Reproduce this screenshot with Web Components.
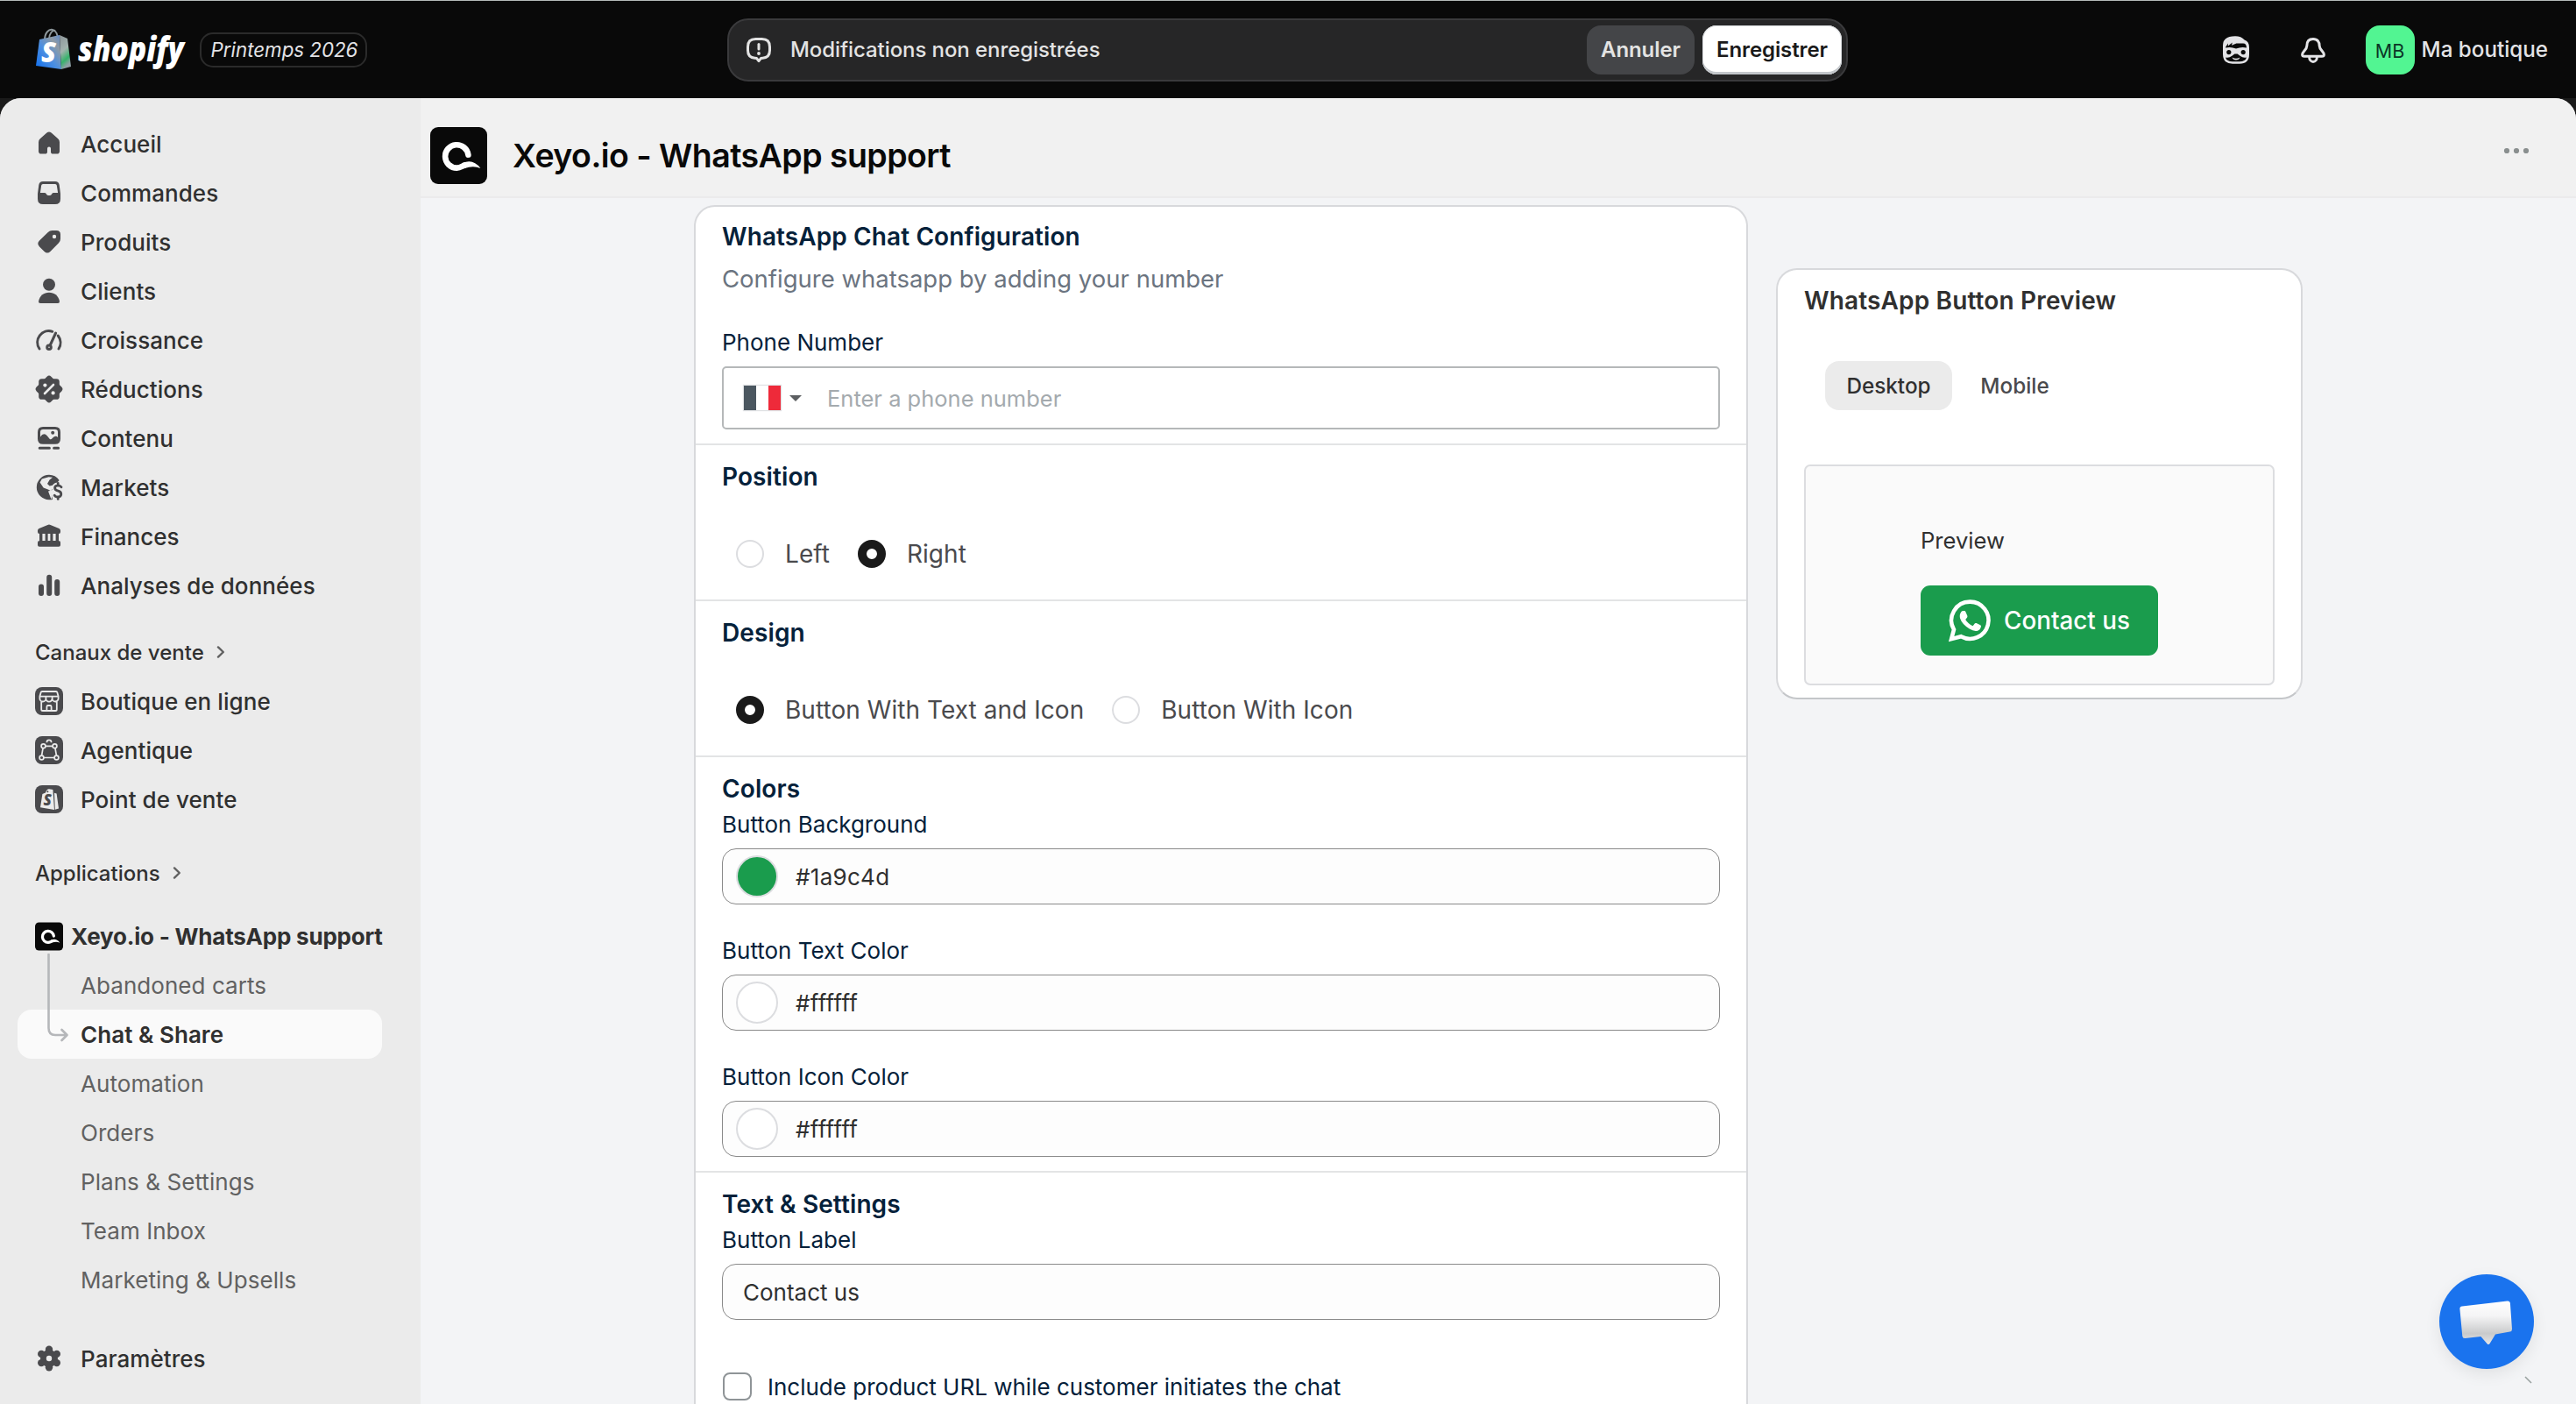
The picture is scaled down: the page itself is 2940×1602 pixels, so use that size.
<!DOCTYPE html>
<html lang="fr">
<head>
<meta charset="utf-8">
<title>Xeyo.io - WhatsApp support</title>
<style>
  html, body {
    margin: 0;
    height: 100%;
    overflow: hidden;
    background: #090909;
    font-family: Inter, "Liberation Sans", sans-serif;
    font-size: 26px;
  }
</style>
</head>
<body>
<admin-app></admin-app>
<script>
// Icons, drawn on a 40x40 grid
const icons = {
  home: '<path fill="currentColor" d="M17.4 7.6 9.8 14.2Q8 15.8 8 18.2V28.5Q8 31.6 11 31.6H15.4Q18 31.6 18 29V25.6A2 2 0 0 1 22 25.6V29Q22 31.6 24.6 31.6H29Q32 31.6 32 28.5V18.2Q32 15.8 30.2 14.2L22.6 7.6Q20 5.6 17.4 7.6Z"/>',
  orders: '<path fill="currentColor" fill-rule="evenodd" d="M13 7H27Q31 7 31.7 11L33 21V27Q33 33 27 33H13Q7 33 7 27V21L8.3 11Q9 7 13 7ZM13 10Q11.4 10 11.2 11.6L9.9 20H14.8Q16.2 20 16.8 21.3 17.5 23 19 23H21Q22.5 23 23.2 21.3 23.8 20 25.2 20H30.1L28.8 11.6Q28.6 10 27 10Z"/>',
  products: '<path fill="currentColor" fill-rule="evenodd" d="M23.5 7H28.5Q33 7 33 11.5V16.5Q33 19.2 31 21.2L21.4 31Q18 34.2 14.6 31L9 25.4Q5.6 22 9 18.6L18.8 9Q20.8 7 23.5 7ZM26 11.8A2.2 2.2 0 1 0 26 16.2A2.2 2.2 0 1 0 26 11.8Z"/>',
  customers: '<circle fill="currentColor" cx="20" cy="12.8" r="7"/><path fill="currentColor" d="M8 31.8C9.4 25.4 14 21.8 20 21.8S30.6 25.4 32 31.8Q32.2 34 30 34H10Q7.8 34 8 31.8Z"/>',
  growth: '<g fill="none" stroke="currentColor" stroke-width="3" stroke-linecap="round"><path d="M9 30A13 13 0 0 1 23.8 10.3M30.2 15A13 13 0 0 1 31 30"/><path d="M27.6 12 21.4 25.5"/><circle cx="20" cy="28.2" r="2.3"/></g>',
  discount: '<g fill="currentColor"><rect x="8.2" y="8.2" width="23.6" height="23.6" rx="3.4"/><rect x="8.2" y="8.2" width="23.6" height="23.6" rx="3.4" transform="rotate(45 20 20)"/></g><path stroke="#ebebeb" stroke-width="2.6" stroke-linecap="round" d="M15 25 25 15"/><circle fill="#ebebeb" cx="15.4" cy="15.6" r="2.1"/><circle fill="#ebebeb" cx="24.6" cy="24.4" r="2.1"/>',
  content: '<path fill="currentColor" fill-rule="evenodd" d="M13 7H27Q33 7 33 13V20.8Q33 26.8 27 26.8H13Q7 26.8 7 20.8V13Q7 7 13 7ZM13 10Q10 10 10 13V18.4Q14 12.6 18 17.6L20.6 20.8Q22 22.2 24 19.8 27.4 16.2 30 19V13Q30 10 27 10Z"/><circle fill="currentColor" cx="24.2" cy="13.8" r="2"/><path stroke="currentColor" stroke-width="3" stroke-linecap="round" d="M9.2 31.2H20.4M25.6 31.2H30.6"/>',
  markets: '<path fill="currentColor" fill-rule="evenodd" d="M20 5.8A14.2 14.2 0 0 1 31.6 12L27 17.6 22 24.6 24 29V34Q22 34.4 20 34.2A14.2 14.2 0 0 1 20 5.8ZM11.8 10.4 9.6 14.6 13.6 20.4 19.4 22.8 22.4 24.4 25.4 20.6 25 17.4 20.6 18.6 18 16 20.6 11.4 24 8.8 19.6 8.2Z"/><path fill="#ebebeb" d="M19 24.5 25 23 23 34 21.6 31.4Z"/><g fill="none" stroke="#ebebeb" stroke-width="6"><path d="M34 19.6Q32.6 17.6 30 17.6 26.6 17.8 26.6 20.8 26.6 23.4 30.4 24.2 33.8 25 33.8 28 33.6 31 30.2 31.2 27 31.2 26 29"/></g><path fill="none" stroke="currentColor" stroke-width="2.8" stroke-linecap="round" d="M34 19.8Q32.6 17.8 30 17.8 26.6 18 26.6 20.8 26.6 23.4 30.4 24.2 33.8 25 33.8 28 33.6 31 30.2 31.2 27.2 31.2 26.2 29.2M30.2 15.4V18M30.2 31V33.4"/>',
  finance: '<path fill="currentColor" d="M7 15V13.4Q7 11.6 8.6 11L18.4 6.9Q20 6.2 21.6 6.9L31.4 11Q33 11.6 33 13.4V15Q33 17 31 17H9Q7 17 7 15ZM7 27Q7 25 9 25H31Q33 25 33 27V30Q33 31.8 31 31.8H9Q7 31.8 7 30ZM9 16h3.4v10H9zM15.6 16h3v10h-3zM21.4 16h3v10h-3zM27.6 16H31v10h-3.4z"/>',
  analytics: '<g fill="currentColor"><rect x="8" y="18.6" width="6" height="13.4" rx="3"/><rect x="17.2" y="7.8" width="6" height="24.2" rx="3"/><rect x="26.2" y="13" width="6" height="19" rx="3"/></g>',
  store: '<rect x="4" y="4" width="32" height="32" rx="8" fill="currentColor"/><g fill="none" stroke="#ebebeb" stroke-width="1.8" stroke-linejoin="round"><path d="M12 9H28Q29 9 29.3 10L30.6 14.6H9.4L10.7 10Q11 9 12 9ZM9.4 14.6V17A3.5 3.5 0 0 0 16.4 17A3.6 3.6 0 0 0 23.6 17A3.5 3.5 0 0 0 30.6 17V14.6M16.4 14.6V17M23.6 14.6V17M11.2 20V29.4Q11.2 31 12.8 31H27.2Q28.8 31 28.8 29.4V20M17.4 31V26.4Q17.4 25 18.8 25H21.2Q22.6 25 22.6 26.4V31"/></g>',
  agent: '<rect x="4" y="4" width="32" height="32" rx="8" fill="currentColor"/><g fill="none" stroke="#ebebeb" stroke-width="1.7"><path d="M16 15.3H24M13 17.8 11.6 26M27 17.8 28.4 26M14 28.5H26M17.4 11.2V11A2.6 2.6 0 0 1 22.6 11V11.2"/><circle cx="13.5" cy="15.3" r="2.4"/><circle cx="26.5" cy="15.3" r="2.4"/><circle cx="11.5" cy="28.5" r="2.4"/><circle cx="28.5" cy="28.5" r="2.4"/></g>',
  pos: '<rect x="4" y="4" width="32" height="32" rx="8" fill="currentColor"/><path fill="#ebebeb" d="M12.4 14 16 12.6Q17 8.4 20 8.2L24.4 9 26 32 10 29.2ZM26 12.8 28.6 13.4 31 30.6 26.8 31.8Z"/><text x="13.4" y="27" font-family="Open Sans" font-weight="800" font-style="italic" font-size="17" fill="#4a4a4d">S</text><circle cx="18.4" cy="11.2" r="1" fill="#4a4a4d"/>',
  gear: '<g fill="currentColor"><circle cx="20" cy="20" r="10"/><circle cx="20" cy="9.8" r="4.2"/><circle cx="20" cy="30.2" r="4.2"/><circle cx="11.2" cy="14.9" r="4.2"/><circle cx="28.8" cy="14.9" r="4.2"/><circle cx="11.2" cy="25.1" r="4.2"/><circle cx="28.8" cy="25.1" r="4.2"/></g><circle cx="20" cy="20" r="3.2" fill="#ebebeb"/>',
  chevron: '<path fill="none" stroke="currentColor" stroke-width="2.4" stroke-linecap="round" stroke-linejoin="round" d="M17 14.4 22.8 20 17 25.6"/>',
  alert: '<path fill="none" stroke="currentColor" stroke-width="3" stroke-linejoin="round" d="M16.4 7.5H23.6Q32.5 7.5 32.5 16.4V20.4Q32.5 28.4 24.6 29.2L22.4 29.6 20 32.6 17.6 29.6 15.4 29.2Q7.5 28.4 7.5 20.4V16.4Q7.5 7.5 16.4 7.5Z"/><path stroke="currentColor" stroke-width="3" stroke-linecap="round" d="M20 13.4V19"/><circle cx="20" cy="24" r="1.9" fill="currentColor"/>',
  sidekick: '<path fill="currentColor" d="M19 4.3Q26 4.3 29.6 8.6 35 10.6 35 17V25Q35 35.7 24 35.7H16Q5 35.7 5 25V15Q5 4.3 19 4.3Z"/><path fill="#090909" d="M8.2 16.6 11 12.6 10.8 15.4 15.8 11.6 15 14.8 20.4 12.4H28Q32 12.4 32 17.6 26 16.2 20 18.6 14 16.2 8.2 17.6ZM8 28.4Q11.6 29.6 15.4 26.8L18.4 24.6H21.6L24.6 26.8Q28.4 29.6 32 28.4 30.6 33.2 24 33.2H16Q9.4 33.2 8 28.4Z"/><circle cx="11.8" cy="22.6" r="2.6" fill="#090909"/><circle cx="28.2" cy="22.6" r="2.6" fill="#090909"/><path fill="currentColor" d="M15.6 28.4Q20 31 24.4 28.4 23.6 31.4 20 31.4T15.6 28.4Z"/>',
  bell: '<path fill="none" stroke="currentColor" stroke-width="3" stroke-linejoin="round" d="M20 7.5C15 7.5 12.8 10.8 12.8 15.4 12.8 19.6 7.6 22 7.6 25.2 7.6 26.6 8.6 27.2 10 27.2H30C31.4 27.2 32.4 26.6 32.4 25.2 32.4 22 27.2 19.6 27.2 15.4 27.2 10.8 25 7.5 20 7.5ZM15.6 28A4.4 5.4 0 0 0 24.4 28"/>',
  dots: '<g fill="currentColor"><circle cx="9" cy="20" r="3.1"/><circle cx="20" cy="20" r="3.1"/><circle cx="31" cy="20" r="3.1"/></g>',
  whatsapp: '<path fill="none" stroke="currentColor" stroke-width="3.8" stroke-linejoin="miter" d="M20.4 2.2A17.6 17.6 0 1 1 11.8 35.2L2.6 37.6 5 28.6A17.6 17.6 0 0 1 20.4 2.2Z"/><path fill="currentColor" d="M13.6 10.8H15Q15.8 10.8 16.2 11.8L17.8 15.6Q18 16.4 17.6 17L16 19.2Q18.6 23.4 23 25.2L25 22.8Q25.6 22.2 26.4 22.6L30.2 24.4Q31 24.8 30.8 25.8 30.4 28.6 28 29.6 24.6 31 19.8 28 12.6 23.6 10.8 17.8 10 14 12.2 11.4 12.8 10.8 13.6 10.8Z"/>',
};

class UiIcon extends HTMLElement {
  connectedCallback() {
    this.attachShadow({ mode: 'open' }).innerHTML = `
<style>
  :host { display: block; flex: none; width: 40px; height: 40px; }
  svg { display: block; width: 100%; height: 100%; overflow: visible; }
</style>
<svg viewBox="0 0 40 40">${ icons[this.getAttribute('name')] }</svg>`;
  }
}
customElements.define('ui-icon', UiIcon);

// Xeyo app logo
class AppLogo extends HTMLElement {
  connectedCallback() {
    this.attachShadow({ mode: 'open' }).innerHTML = `
<style>
  :host { display: block; flex: none; width: 65px; height: 65px; }
  svg { display: block; width: 100%; height: 100%; }
</style>
<svg viewBox="0 0 65 65">
  <rect width="65" height="65" rx="9" fill="#090909"/>
  <path fill="none" stroke="#fff" stroke-width="6.6" stroke-linecap="round" d="M43.4 31.6A13.2 13.2 0 1 0 30.4 46.6C34 46.6 36.4 44.6 39.4 43.4"/>
  <path fill="#fff" d="M37 41.2Q48.6 35.6 57.4 47 49.6 43.6 39.4 46.9Z"/>
</svg>`;
  }
}
customElements.define('app-logo', AppLogo);

class SaveBar extends HTMLElement {
  connectedCallback() {
    this.attachShadow({ mode: 'open' }).innerHTML = `
<style>
  :host {
    display: flex;
    align-items: center;
    box-sizing: border-box;
    width: 1279px;
    height: 72px;
    padding: 0 5px 0 14px;
    border: 2px solid #3a3a3c;
    border-radius: 24px;
    background: #262627;
    color: #e3e3e3;
  }
  span { flex: 1; margin-left: 16px; font-size: 24px; font-weight: 500; letter-spacing: -0.08px; }
  button {
    height: 56px;
    border: 0;
    border-radius: 16px;
    padding: 0;
    font: 600 24px Inter, sans-serif;
    letter-spacing: -0.1px;
    white-space: nowrap;
  }
  .cancel { width: 123px; background: #444548; color: #e3e3e3; }
  .save {
    width: 159px;
    margin-left: 9px;
    background: #fff;
    color: #1a1a1a;
    box-shadow: inset 0 -3px 0 #c3c7cb, inset 0 0 0 1px #d8dadd;
  }
</style>
<ui-icon name="alert"></ui-icon>
<span>Modifications non enregistrées</span>
<button class="cancel">Annuler</button>
<button class="save">Enregistrer</button>`;
  }
}
customElements.define('save-bar', SaveBar);

class TopBar extends HTMLElement {
  connectedCallback() {
    this.attachShadow({ mode: 'open' }).innerHTML = `
<style>
  :host {
    display: grid;
    grid-template-columns: 830px auto 1fr;
    align-items: center;
    box-sizing: border-box;
    height: 112px;
    border-top: 1px solid #b4bab9;
    background: #090909;
    color: #e3e3e6;
  }
  .brand, .right { display: flex; align-items: center; }
  .brand { padding-left: 40px; }
  .brand svg { display: block; overflow: visible; }
  .edition {
    box-sizing: border-box;
    width: 191px;
    height: 40px;
    margin-left: 14px;
    padding-left: 2px;
    border: 2px solid #2b2b2b;
    border-radius: 15px;
    font-size: 22.3px;
    font-style: italic;
    line-height: 36px;
    text-align: center;
    white-space: nowrap;
  }
  .right { justify-content: flex-end; padding-right: 32px; }
  ui-icon + ui-icon { margin-left: 48px; }
  .avatar {
    width: 56px;
    height: 56px;
    margin-left: 40px;
    border-radius: 16px;
    background: #52f592;
    color: #0b3527;
    font-size: 21.5px;
    line-height: 58px;
    text-align: center;
  }
  .shop { margin-left: 8px; font-size: 24.2px; font-weight: 500; }
</style>
<div class="brand">
  <svg width="174" height="50" viewBox="0 0 174 50">
    <defs>
      <linearGradient id="front" x1="0" y1="1" x2="1" y2="0">
        <stop offset="0" stop-color="#0f6ff0"/><stop offset=".45" stop-color="#4d8fe0"/><stop offset=".75" stop-color="#8f9ba5"/><stop offset="1" stop-color="#5b8bd0"/>
      </linearGradient>
      <linearGradient id="side" x1="0" y1="0" x2=".3" y2="1">
        <stop offset="0" stop-color="#8b9499"/><stop offset=".5" stop-color="#a3b3ae"/><stop offset=".8" stop-color="#37b36b"/><stop offset="1" stop-color="#8fa0a5"/>
      </linearGradient>
    </defs>
    <path d="M11 14C11 5 16 1 20 2S26 8 26 13M16 13C16 6 20 2 23 3" fill="none" stroke="#8d979b" stroke-width="2"/>
    <path d="M5 13 28 8 30 47 1 43Z" fill="url(#front)"/>
    <path d="M28 8 37 12 41 44 30 47Z" fill="url(#side)"/>
    <text x="7" y="39" font-family="Open Sans" font-weight="800" font-style="italic" font-size="31" fill="#fff">S</text>
    <text x="49" y="38" font-family="Open Sans" font-weight="800" font-style="italic" font-size="38" fill="#fff" textLength="121" lengthAdjust="spacingAndGlyphs">shopify</text>
  </svg>
  <div class="edition">Printemps 2026</div>
</div>
<save-bar></save-bar>
<div class="right">
  <ui-icon name="sidekick"></ui-icon>
  <ui-icon name="bell"></ui-icon>
  <div class="avatar">MB</div>
  <div class="shop">Ma boutique</div>
</div>`;
  }
}
customElements.define('top-bar', TopBar);

class NavItem extends HTMLElement {
  connectedCallback() {
    const icon = this.getAttribute('icon');
    this.attachShadow({ mode: 'open' }).innerHTML = `
<style>
  :host {
    display: flex;
    align-items: center;
    width: 416px;
    height: 56px;
    margin-left: 20px;
    border-radius: 16px;
    box-sizing: border-box;
    padding-left: 16px;
    color: #4a4a4d;
    white-space: nowrap;
  }
  :host([sub]) { padding-left: 72px; }
  :host([current]) { background: #fafafa; }
  .label { margin-left: 16px; color: #303030; font-weight: 500; letter-spacing: 0.06px; }
  :host([sub]) .label { margin-left: 0; color: #616161; font-weight: 400; }
  :host([current]) .label { color: #303030; font-weight: 600; }
</style>
${ icon ? `<ui-icon name="${ icon }"></ui-icon>` : '' }
<span class="label"><slot></slot></span>`;
  }
}
customElements.define('nav-item', NavItem);

class SideNav extends HTMLElement {
  connectedCallback() {
    this.attachShadow({ mode: 'open' }).innerHTML = `
<style>
  :host {
    display: flex;
    flex-direction: column;
    box-sizing: border-box;
    width: 480px;
    padding-top: 24px;
    background: #ebebeb;
  }
  h3 {
    display: flex;
    align-items: center;
    height: 40px;
    margin: 28px 0 8px 40px;
    color: #303030;
    font-size: 24px;
    font-weight: 500;
  }
  h3 ui-icon { margin-left: -1px; color: #616161; }
  .apps { margin-top: 36px; }
  .app {
    position: relative;
    display: flex;
    align-items: center;
    height: 56px;
    margin: 16px 0 0 40px;
    color: #303030;
    font-weight: 700;
    letter-spacing: -0.22px;
    white-space: nowrap;
  }
  .app app-logo { width: 32px; height: 33px; margin-right: 9px; }
  /* branch from the app down to the current page */
  .branch { position: absolute; left: 10px; top: 48px; z-index: 1; }
  .settings { margin-top: 34px; }
</style>
<nav-item icon="home">Accueil</nav-item>
<nav-item icon="orders">Commandes</nav-item>
<nav-item icon="products">Produits</nav-item>
<nav-item icon="customers">Clients</nav-item>
<nav-item icon="growth">Croissance</nav-item>
<nav-item icon="discount">Réductions</nav-item>
<nav-item icon="content">Contenu</nav-item>
<nav-item icon="markets">Markets</nav-item>
<nav-item icon="finance">Finances</nav-item>
<nav-item icon="analytics">Analyses de données</nav-item>
<h3>Canaux de vente<ui-icon name="chevron"></ui-icon></h3>
<nav-item icon="store">Boutique en ligne</nav-item>
<nav-item icon="agent">Agentique</nav-item>
<nav-item icon="pos">Point de vente</nav-item>
<h3 class="apps">Applications<ui-icon name="chevron"></ui-icon></h3>
<div class="app">
  <app-logo></app-logo>Xeyo.io - WhatsApp support
  <svg class="branch" width="32" height="104" viewBox="0 0 32 104" fill="none" stroke="#b5b7ba" stroke-width="2.6" stroke-linecap="round" stroke-linejoin="round">
    <path d="M5.5 1V85Q5.5 93 13 93H26M20.5 87 26.5 93 20.5 99"/>
  </svg>
</div>
<nav-item sub>Abandoned carts</nav-item>
<nav-item sub current>Chat &amp; Share</nav-item>
<nav-item sub>Automation</nav-item>
<nav-item sub>Orders</nav-item>
<nav-item sub>Plans &amp; Settings</nav-item>
<nav-item sub>Team Inbox</nav-item>
<nav-item sub>Marketing &amp; Upsells</nav-item>
<nav-item class="settings" icon="gear">Paramètres</nav-item>`;
  }
}
customElements.define('side-nav', SideNav);

class AppHeader extends HTMLElement {
  connectedCallback() {
    this.attachShadow({ mode: 'open' }).innerHTML = `
<style>
  :host {
    display: flex;
    align-items: flex-start;
    box-sizing: border-box;
    height: 114px;
    padding: 33px 48px 0 11px;
    border-bottom: 2px solid #ebebec;
    background: #f1f1f1;
  }
  h1 {
    flex: 1;
    margin: 0 0 0 29px;
    color: #090909;
    font-size: 37.5px;
    font-weight: 600;
    letter-spacing: -0.55px;
    line-height: 65px;
  }
  ui-icon { margin-top: 7px; color: #8a8f8f; }
</style>
<app-logo></app-logo>
<h1><slot></slot></h1>
<ui-icon name="dots"></ui-icon>`;
  }
}
customElements.define('app-header', AppHeader);

class CardSection extends HTMLElement {
  connectedCallback() {
    this.attachShadow({ mode: 'open' }).innerHTML = `
<style>
  :host {
    display: block;
    padding: 20px 30px 16px 30px;
    border-bottom: 2px solid #e3e4e5;
  }
  h2 {
    margin: 0;
    color: #05213a;
    font-size: 28px;
    font-weight: 600;
    letter-spacing: 0.1px;
    line-height: 32px;
  }
</style>
<h2>${ this.getAttribute('heading') }</h2>
<slot></slot>`;
  }
}
customElements.define('card-section', CardSection);

class RadioGroup extends HTMLElement {
  connectedCallback() {
    const options = JSON.parse(this.getAttribute('options'));
    this.attachShadow({ mode: 'open' }).innerHTML = `
<style>
  :host { display: flex; gap: 32px; margin: 56px 0 20px 16px; }
  label { display: flex; align-items: center; height: 32px; color: #4a4a4d; font-size: 28px; letter-spacing: 0.05px; }
  i {
    box-sizing: border-box;
    width: 32px;
    height: 32px;
    margin-right: 24px;
    border: 2px solid #dcdde0;
    border-radius: 50%;
    background: #fff;
  }
  .on { border: 10px solid #1a1a1a; }
</style>
${ options.map((text, i) => `<label><i class="${ i == this.getAttribute('value') ? 'on' : '' }"></i>${ text }</label>`).join('') }`;
  }
}
customElements.define('radio-group', RadioGroup);

class FormField extends HTMLElement {
  connectedCallback() {
    const color = this.getAttribute('color');
    this.attachShadow({ mode: 'open' }).innerHTML = `
<style>
  :host { display: block; margin-top: 37px; }
  :host([tight]) { margin-top: 9px; }
  label { display: block; color: #05213a; font-size: 26px; line-height: 32px; }
  .box {
    display: flex;
    align-items: center;
    box-sizing: border-box;
    height: 64px;
    margin-top: 11px;
    border: 1px solid #8a8a8a;
    border-radius: 16px;
    background: #fdfdfd;
    padding-left: ${ color ? 15 : 23 }px;
    color: #303030;
    font-size: 26px;
    letter-spacing: ${ color ? 0.3 : 0 }px;
  }
  :host([phone]) .box { height: 72px; border: 2px solid #b5b8b9; border-radius: 5px; background: #fff; color: #a4aaae; font-size: 25.5px; }
  .swatch {
    box-sizing: border-box;
    width: 48px;
    height: 48px;
    margin-right: 20px;
    border: 2px solid #dcdde0;
    border-radius: 50%;
    background: ${ color };
  }
  .flag {
    width: 42px;
    height: 28px;
    background: linear-gradient(90deg, #4b5760 14px, #fff 14px 28px, #ee2a3a 28px);
    box-shadow: 0 0 1px 1px #dfe1e3;
  }
  .caret {
    margin: 0 29px 0 10px;
    border: 7px solid transparent;
    border-top-color: #5c5f61;
    border-bottom: 0;
  }
</style>
<label>${ this.getAttribute('label') }</label>
<div class="box">
  ${ color ? '<span class="swatch"></span>' : '' }
  ${ this.hasAttribute('phone') ? '<span class="flag"></span><span class="caret"></span>' : '' }
  <slot></slot>
</div>`;
  }
}
customElements.define('form-field', FormField);

class ConfigCard extends HTMLElement {
  connectedCallback() {
    this.attachShadow({ mode: 'open' }).innerHTML = `
<style>
  :host {
    display: block;
    box-sizing: border-box;
    width: 1203px;
    height: 1500px;
    border: 2px solid #d8d9dc;
    border-radius: 24px;
    background: #fff;
  }
  card-section:first-of-type { padding-top: 18px; }
  card-section:last-of-type { border: 0; }
  p { margin: 12px 0 0; color: #6b7480; font-size: 27.5px; line-height: 40px; }
  .check { display: flex; align-items: center; height: 32px; margin: 60px 0 0 1px; color: #05213a; font-size: 26px; }
  .check i {
    box-sizing: border-box;
    width: 33px;
    height: 32px;
    margin-right: 18px;
    border: 2px solid #8f9497;
    border-radius: 8px;
  }
</style>
<card-section heading="WhatsApp Chat Configuration">
  <p>Configure whatsapp by adding your number</p>
  <form-field label="Phone Number" phone>Enter a phone number</form-field>
</card-section>
<card-section heading="Position">
  <radio-group options='["Left","Right"]' value="1"></radio-group>
</card-section>
<card-section heading="Design">
  <radio-group options='["Button With Text and Icon","Button With Icon"]' value="0"></radio-group>
</card-section>
<card-section heading="Colors">
  <form-field tight label="Button Background" color="#1a9c4d">#1a9c4d</form-field>
  <form-field label="Button Text Color" color="#ffffff">#ffffff</form-field>
  <form-field label="Button Icon Color" color="#ffffff">#ffffff</form-field>
</card-section>
<card-section heading="Text &amp;amp; Settings">
  <form-field tight label="Button Label">Contact us</form-field>
  <div class="check"><i></i>Include product URL while customer initiates the chat</div>
</card-section>`;
  }
}
customElements.define('config-card', ConfigCard);

class PreviewCard extends HTMLElement {
  connectedCallback() {
    this.attachShadow({ mode: 'open' }).innerHTML = `
<style>
  :host {
    display: block;
    box-sizing: border-box;
    width: 601px;
    height: 492px;
    margin-top: 72px;
    padding: 19px 30px 0 30px;
    border: 2px solid #d8d9dc;
    border-bottom-color: #c4c6c9;
    border-radius: 24px;
    background: #fff;
    color: #303030;
  }
  h2 { margin: 0; font-size: 28px; font-weight: 600; letter-spacing: 0.15px; line-height: 32px; }
  .tabs { display: flex; margin: 53px 0 0 24px; font-size: 24.3px; line-height: 56px; }
  .tabs span { width: 145px; text-align: center; border-radius: 16px; color: #4a4a4d; font-weight: 500; }
  .tabs .on { background: #ebebeb; color: #303030; }
  .tabs span:last-child { width: 143px; }
  .stage {
    box-sizing: border-box;
    height: 252px;
    margin-top: 62px;
    padding: 69px 0 0 131px;
    border: 2px solid #dcdde0;
    border-radius: 7px;
    background: #fafafa;
  }
  .stage p { margin: 0; font-size: 25.6px; line-height: 32px; }
  button {
    display: flex;
    align-items: center;
    width: 271px;
    height: 80px;
    margin-top: 35px;
    padding: 0 0 0 32px;
    border: 0;
    border-radius: 11px;
    background: #1a9c4d;
    color: #fff;
    font: 500 27.8px Inter, sans-serif;
    white-space: nowrap;
  }
  button ui-icon { width: 48px; height: 48px; margin-right: 15px; }
</style>
<h2>WhatsApp Button Preview</h2>
<div class="tabs"><span class="on">Desktop</span><span>Mobile</span></div>
<div class="stage">
  <p>Preview</p>
  <button><ui-icon name="whatsapp"></ui-icon>Contact us</button>
</div>`;
  }
}
customElements.define('preview-card', PreviewCard);

// Floating chat button
class ChatLauncher extends HTMLElement {
  connectedCallback() {
    this.attachShadow({ mode: 'open' }).innerHTML = `
<style>
  :host { position: fixed; left: 2784px; top: 1454px; z-index: 2; }
  svg { display: block; overflow: visible; }
  .disc { width: 108px; height: 108px; border-radius: 50%; background: #1a73ee; box-shadow: 0 6px 18px rgba(0, 0, 0, .08); }
</style>
<div class="disc">
<svg width="108" height="108" viewBox="0 0 108 108">
  <defs>
    <linearGradient id="g" x1="0" y1="0" x2="0" y2="1">
      <stop offset="0" stop-color="#fff"/><stop offset=".35" stop-color="#f4f4f5"/><stop offset=".75" stop-color="#c9cacb"/><stop offset="1" stop-color="#e6e6e7"/>
    </linearGradient>
  </defs>
  <path fill="url(#g)" d="M26 36.4 77.6 30.4Q80.6 30.2 80.9 33L83 62.6Q83.1 65.2 80.6 65.6L64 68.6 57.6 79Q56.2 81 54.6 79.2L47.4 71 29.4 73Q26.6 73.2 26.3 70.4L23.4 39.4Q23.2 36.8 26 36.4Z"/>
  <path stroke="#9aa3a1" stroke-width="1.6" d="M98 117 105 124"/>
</svg>
</div>`;
  }
}
customElements.define('chat-launcher', ChatLauncher);

class AdminApp extends HTMLElement {
  connectedCallback() {
    this.attachShadow({ mode: 'open' }).innerHTML = `
<style>
  :host { display: block; height: 1602px; overflow: hidden; background: #1a1a1a; }
  .frame {
    display: flex;
    height: 1490px;
    overflow: hidden;
    border-radius: 24px 24px 0 0;
    background: #f3f4f6;
  }
  main { flex: 1; }
  .content { display: flex; align-items: flex-start; gap: 32px; padding: 8px 0 0 312px; }
</style>
<top-bar></top-bar>
<div class="frame">
  <side-nav></side-nav>
  <main>
    <app-header>Xeyo.io - WhatsApp support</app-header>
    <div class="content">
      <config-card></config-card>
      <preview-card></preview-card>
    </div>
  </main>
</div>
<chat-launcher></chat-launcher>`;
  }
}
customElements.define('admin-app', AdminApp);
</script>
</body>
</html>
